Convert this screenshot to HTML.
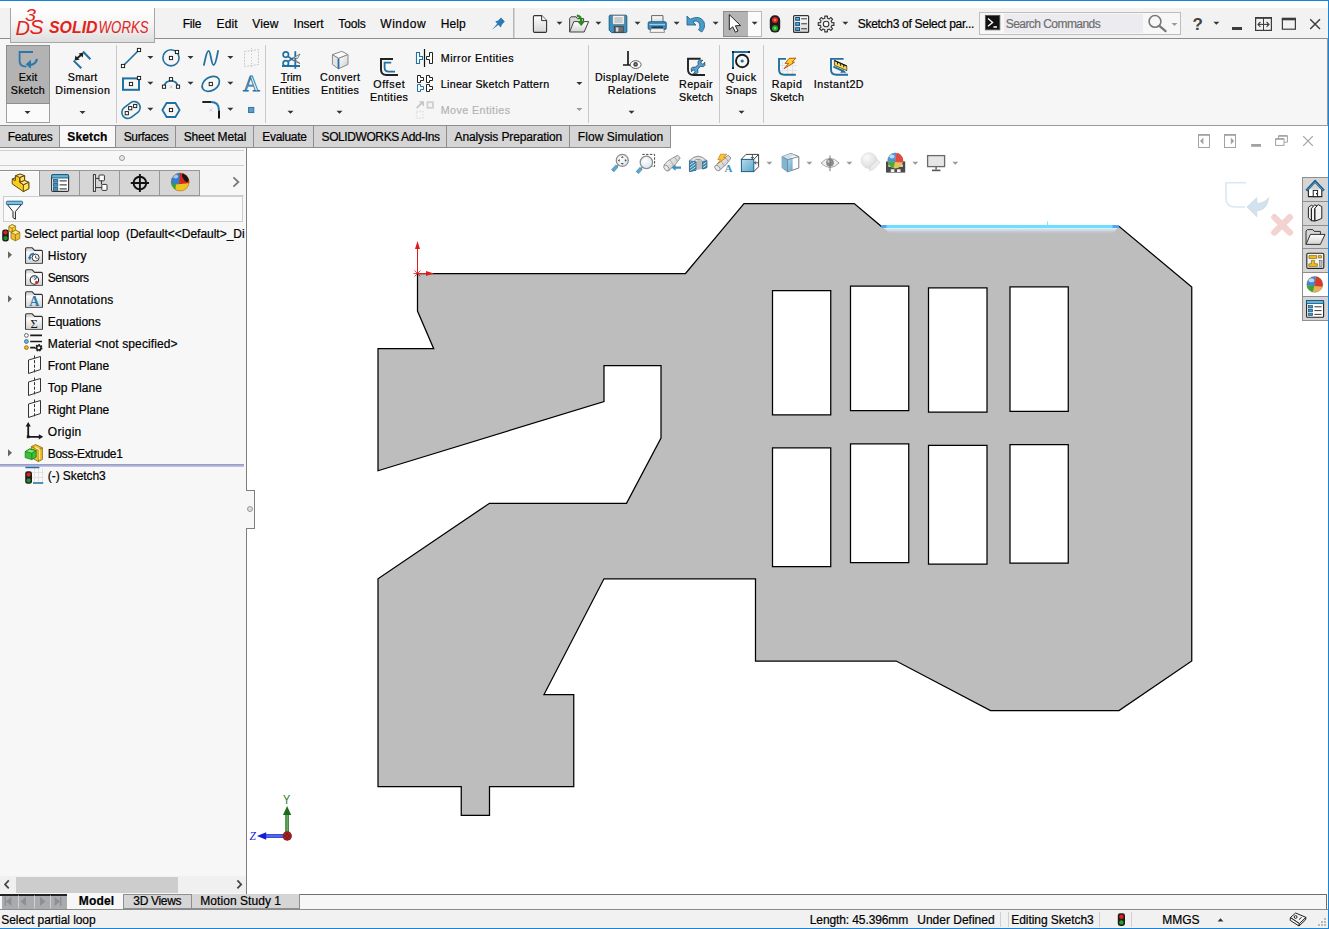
<!DOCTYPE html>
<html lang="en">
<head>
<meta charset="utf-8">
<title>SOLIDWORKS - Sketch3 of Select partial loop</title>
<style>
html,body{margin:0;padding:0;background:#fff;}
body{width:1329px;height:929px;overflow:hidden;}
#app{position:relative;width:1329px;height:929px;overflow:hidden;background:#fff;font-family:"Liberation Sans",sans-serif;font-size:12px;line-height:16px;color:#000;}
#app div,#app span,#app svg{position:absolute;box-sizing:border-box;}
.t{white-space:pre;line-height:16px;height:16px;-webkit-text-stroke:0.2px currentColor;}
.t u{text-decoration:underline;}
.vsep{width:1px;top:45px;height:78px;background:#c9c9c9;}
.cmtab{top:125px;height:23px;background:#d5d5d5;border:1px solid #8e8e8e;}
.ptab{top:170px;height:26px;background:#d6d6d6;border:1px solid #979797;}
.btab{top:894px;height:15px;background:#d5d5d5;border:1px solid #8e8e8e;border-top:none;}
.tp{left:1302px;width:26px;height:25px;background:#d5d5d5;border:1px solid #8e8e8e;border-right:none;}
.dd{width:0;height:0;border-left:3px solid transparent;border-right:3px solid transparent;border-top:3px solid #333;}
.ddg{width:0;height:0;border-left:3px solid transparent;border-right:3px solid transparent;border-top:3px solid #9a9a9a;}
</style>
</head>
<body>
<div id="app">
<!-- window frame / title bar -->
<div style="left:0;top:0;width:1329px;height:1px;background:#1883d7"></div>
<div style="left:0;top:8px;width:1328px;height:30px;background:#f2f2f2"></div>
<div style="left:0;top:38px;width:1328px;height:1px;background:#8c8c8c"></div>
<!-- command manager background -->
<div style="left:0;top:39px;width:1328px;height:86px;background:#f6f6f6"></div>
<div style="left:0;top:125px;width:1328px;height:1px;background:#9b9b9b"></div>
<div style="left:1327px;top:38px;width:1px;height:88px;background:#9b9b9b"></div>
<!-- logo plate -->
<div style="left:10px;top:8px;width:145px;height:35px;border:1px solid #a6a6a6;border-top:none;background:linear-gradient(180deg,#ffffff 0%,#f6f6f6 45%,#dedede 100%)"></div>
<!-- title bar separator -->
<div style="left:513px;top:8px;width:2px;height:30px;background:linear-gradient(90deg,#a9a9a9,#e3e3e3)"></div>
<!-- select button -->
<div style="left:723px;top:11px;width:26px;height:26px;background:#b4b4b4;border:1px solid #8c8c8c"></div>
<div style="left:748px;top:11px;width:14px;height:26px;background:#fbfbfb;border:1px solid #b9b9b9;border-left:none"></div>
<!-- search box -->
<div style="left:979px;top:12px;width:202px;height:23px;background:#f7f7f7;border:1px solid #bdbdbd"></div>
<div style="left:1004px;top:14px;width:139px;height:19px;background:#ececf0"></div>
<!-- Exit sketch pressed button -->
<div style="left:6px;top:45px;width:44px;height:78px;background:#fbfbfb;border:1px solid #a0a0a0"></div>
<div style="left:6px;top:45px;width:44px;height:59px;background:#b3b3b3;border:1px solid #8f8f8f"></div>
<!-- CM separators -->
<div class="vsep" style="left:116px"></div>
<div class="vsep" style="left:265px"></div>
<div class="vsep" style="left:588px"></div>
<div class="vsep" style="left:719px"></div>
<div class="vsep" style="left:763px"></div>
<!-- left panel -->
<div style="left:0;top:126px;width:246px;height:768px;background:#f7f7f7"></div>
<div style="left:246px;top:126px;width:1px;height:768px;background:#7f7f7f"></div>

<div style="left:0;top:150px;width:244px;height:1px;background:#cfcfcf"></div>
<div style="left:0;top:165px;width:244px;height:1px;background:#cfcfcf"></div>
<div style="left:119px;top:155px;width:6px;height:6px;border-radius:3px;border:1px solid #9a9a9a;background:#e9e9e9"></div>
<!-- CM tabs -->
<div class="cmtab" style="left:-1px;width:61px"></div>
<div style="left:60px;top:126px;width:55px;height:21px;background:#f8f8f8"></div>
<div style="left:0;top:147px;width:247px;height:1px;background:#858585"></div>
<div class="cmtab" style="left:115px;width:61px"></div>
<div class="cmtab" style="left:175px;width:79px"></div>
<div class="cmtab" style="left:253px;width:61px"></div>
<div class="cmtab" style="left:313px;width:134px"></div>
<div class="cmtab" style="left:446px;width:124px"></div>
<div class="cmtab" style="left:569px;width:102px"></div>
<!-- panel tabs -->
<div style="left:0;top:170px;width:40px;height:1px;background:#8e8e8e"></div>
<div style="left:0;top:171px;width:39px;height:1px;background:#fff"></div>
<div style="left:38px;top:171px;width:1px;height:25px;background:#fff"></div>
<div class="ptab" style="left:39px;width:41px"></div>
<div class="ptab" style="left:79px;width:41px"></div>
<div class="ptab" style="left:119px;width:41px"></div>
<div class="ptab" style="left:159px;width:41px"></div>
<div style="left:200px;top:195px;width:44px;height:1px;background:#cfcfcf"></div>
<!-- filter box -->
<div style="left:3px;top:196px;width:240px;height:26px;background:#fafafa;border:1px solid #cdcdcd"></div>
<!-- rollback bar -->
<div style="left:0;top:464px;width:244px;height:3px;background:linear-gradient(180deg,#8e93c4,#c9cce6)"></div>
<!-- splitter handle -->
<div style="left:246px;top:490px;width:9px;height:39px;background:#f7f7f7;border:1px solid #7f7f7f;border-left:none"></div>
<div style="left:247px;top:506px;width:6px;height:6px;border-radius:3px;border:1px solid #9a9a9a;background:#dcdcdc"></div>
<!-- tree scrollbar -->
<div style="left:0;top:876px;width:246px;height:17px;background:#f0f0f0"></div>
<div style="left:16px;top:877px;width:162px;height:16px;background:#cdcdcd"></div>
<!-- bottom tab row -->
<div style="left:0;top:894px;width:1327px;height:1px;background:#6f6f6f"></div>
<div style="left:0;top:895px;width:1326px;height:14px;background:#f7f7f7"></div>
<div style="left:1326px;top:894px;width:1px;height:16px;background:#6f6f6f"></div>
<div style="left:0;top:909px;width:1328px;height:1px;background:#8c8c8c"></div>
<div style="left:2px;top:895px;width:65px;height:14px;background:#a9abae"></div>
<div style="left:0;top:894px;width:67px;height:2px;background:#222"></div>
<div style="left:67px;top:894px;width:56px;height:15px;background:#f7f7f7"></div>
<div class="btab" style="left:123px;width:69px;border-top:1px solid #8e8e8e"></div>
<div class="btab" style="left:191px;width:109px"></div>
<!-- status bar -->
<div style="left:0;top:910px;width:1328px;height:18px;background:#f1f1f1"></div>
<div style="left:0;top:928px;width:1329px;height:1px;background:#1883d7"></div>
<div style="left:1328px;top:0;width:1px;height:929px;background:#1883d7"></div>
<div style="left:1000px;top:912px;width:1px;height:15px;background:#d0d0d0"></div>
<div style="left:1008px;top:912px;width:1px;height:15px;background:#d0d0d0"></div>
<div style="left:1099px;top:912px;width:1px;height:15px;background:#d0d0d0"></div>
<div style="left:1131px;top:912px;width:1px;height:15px;background:#d0d0d0"></div>
<!-- task pane -->
<div class="tp" style="top:177px"></div>
<div class="tp" style="top:201px"></div>
<div class="tp" style="top:225px"></div>
<div class="tp" style="top:248px"></div>
<div class="tp" style="top:272px;background:#fdfdfd"></div>
<div class="tp" style="top:296px"></div>
<!-- graphics area drawing -->
<svg style="left:247px;top:126px" width="1081" height="768" viewBox="247 126 1081 768">
<defs>
<filter id="glow" x="-5%" y="-400%" width="110%" height="900%"><feGaussianBlur stdDeviation="1.6"/></filter>
</defs>
<path fill="#bdbdbd" stroke="#000" stroke-width="1.25" stroke-linejoin="miter" fill-rule="evenodd" d="M417.5 273.5 L685.5 273.5 L744 203.5 L854.25 203.5 L881.5 226.5 L1119.25 226.5 L1191.75 287 L1191.75 661 L1119 710.5 L990.5 710.5 L896.2 661 L755.5 661 L755.5 578.75 L604 578.75 L544 694.5 L573.75 694.5 L573.75 786.5 L489.5 786.5 L489.5 815.25 L461.25 815.25 L461.25 786.5 L378 786.5 L378 578.75 L489.5 503.25 L626.5 503.25 L661 438 L661 365.5 L604 365.5 L604 401.5 L378 470.75 L378 348.7 L433.7 348.7 L417.5 311 Z
M772.5 290.5 H830.75 V414.75 H772.5 Z M850.5 286 H908.75 V410.5 H850.5 Z M928.5 287.75 H987 V412 H928.5 Z M1010 286.75 H1068.25 V411.25 H1010 Z
M772.5 447.75 H830.75 V566.5 H772.5 Z M850.5 443.75 H908.75 V562.5 H850.5 Z M928.5 445.25 H987 V564 H928.5 Z M1010 444.5 H1068.25 V563 H1010 Z"/>
<!-- selected edge -->
<linearGradient id="gglow" x1="0" y1="0" x2="0" y2="1"><stop offset="0" stop-color="#e9f6ff" stop-opacity="1"/><stop offset="0.45" stop-color="#d3dbee" stop-opacity="0.75"/><stop offset="1" stop-color="#bdbdbd" stop-opacity="0"/></linearGradient>
<path d="M883 227.5 H1118 L1112 234.5 H891 Z" fill="url(#gglow)"/>
<rect x="881.5" y="225" width="237.5" height="3" fill="#6ce0ff"/>
<rect x="881.5" y="225" width="5" height="3" fill="#5aa2f2"/>
<rect x="1112.5" y="225" width="6.5" height="3" fill="#5aa2f2"/>
<line x1="1047.5" y1="221.5" x2="1047.5" y2="225" stroke="#7fe2ff" stroke-width="1"/>
<!-- sketch origin -->
<g stroke="#e21b1b" fill="#e21b1b" stroke-width="1">
<line x1="417.5" y1="273.5" x2="417.5" y2="243"/><polygon points="417.5,241 415,249 420,249" stroke="none"/>
<line x1="417.5" y1="273.5" x2="431" y2="273.5"/><polygon points="434,273.5 426,271 426,276" stroke="none"/>
<path d="M414.5 270.5 L420.5 276.5 M420.5 270.5 L414.5 276.5 M413.5 273.5 H421.5" fill="none" stroke-width="0.8"/>
</g>
<!-- triad -->
<g>
<rect x="285.3" y="814" width="3.5" height="19" fill="#1c6b1c"/><rect x="286.4" y="814.5" width="1.4" height="18" fill="#78b878"/>
<polygon points="287.1,806 283,815 291.2,815" fill="#1c6b1c"/>
<rect x="265.5" y="834.2" width="18" height="3.6" fill="#1a1ae0"/><rect x="266" y="835.3" width="17" height="1.4" fill="#5c94e4"/>
<polygon points="257,836 266.2,832.2 266.2,839.8" fill="#1a1ad8"/>
<circle cx="287.2" cy="836" r="4.7" fill="#7c1c1c"/>
<path d="M284 833 L290.4 839 M290.4 833 L284 839 M283 836 L287.2 831.6 L291.4 836 L287.2 840.4 Z" fill="none" stroke="#e62222" stroke-width="0.5"/>
<text x="283" y="803.6" font-family="Liberation Sans, sans-serif" font-size="12" fill="#1e7a1e" textLength="7.2" lengthAdjust="spacingAndGlyphs">Y</text>
<text x="249.6" y="839.8" font-family="Liberation Serif, serif" font-size="12.5" font-style="italic" fill="#1a1ae0" textLength="6.4" lengthAdjust="spacingAndGlyphs">Z</text>
</g>
</svg>
<!-- icons overlay (page coordinates) -->
<svg style="left:0;top:0;pointer-events:none" width="1329" height="929" viewBox="0 0 1329 929">
<defs>
<g id="dd"><path d="M-3 -1.5 H3 L0 1.5 Z" fill="#333"/></g>
<g id="ddg"><path d="M-3 -1.5 H3 L0 1.5 Z" fill="#9a9a9a"/></g>
<g id="sq"><rect x="-1.6" y="-1.6" width="3.2" height="3.2" fill="#fff" stroke="#1a1a1a" stroke-width="0.95"/></g>
<linearGradient id="gcube" x1="0" y1="0" x2="1" y2="1"><stop offset="0" stop-color="#fff"/><stop offset="1" stop-color="#cfcfcf"/></linearGradient>
<linearGradient id="gblue" x1="0" y1="0" x2="0" y2="1"><stop offset="0" stop-color="#8cc3de"/><stop offset="1" stop-color="#2d7fae"/></linearGradient>
<linearGradient id="gyel" x1="0" y1="0" x2="0" y2="1"><stop offset="0" stop-color="#ffe680"/><stop offset="1" stop-color="#e0a400"/></linearGradient>
<linearGradient id="gfold" x1="0" y1="0" x2="0" y2="1"><stop offset="0" stop-color="#ffffff"/><stop offset="1" stop-color="#d4d4d4"/></linearGradient>
</defs>
<!-- ===== Command manager icons ===== -->
<g id="ic-exit" fill="none" stroke="#2878ab" stroke-width="1.8">
<path d="M33 52 H19.6 V61 Q19.6 66.6 26.5 66.6"/>
<path d="M37 59 Q35.5 65.2 29 64.8" stroke-width="2.2"/>
<path d="M25.6 64.3 L31 59.8 L31 68.8 Z" fill="#2878ab" stroke="none"/>
</g>
<g id="ic-smart">
<path d="M73.6 60.6 L81.3 68.3 M83 51.5 L90.4 59.2" stroke="#21709f" stroke-width="2" fill="none"/>
<path d="M76.6 58.8 L81.6 54.4" stroke="#222" stroke-width="2"/>
<path d="M74.6 60.4 L75.4 55.6 L79.6 59.8 Z M83.4 52.6 L82.8 57.6 L78.6 53.4 Z" fill="#222"/>
</g>
<!-- row 1 -->
<g><path d="M123 66 L139 50" stroke="#21709f" stroke-width="1.7"/><use href="#sq" x="123" y="66"/><use href="#sq" x="139" y="50"/></g>
<use href="#dd" x="150.4" y="57.5"/>
<g><circle cx="171" cy="57.8" r="8.1" fill="none" stroke="#21709f" stroke-width="1.6"/><use href="#sq" x="171" y="58"/><use href="#sq" x="177" y="52"/></g>
<use href="#dd" x="190.5" y="57.5"/>
<path d="M203.8 65.6 C205.5 58 206.5 50.8 208.6 50.8 C211 50.8 211 65 213.6 65 C215.8 65 217 56 218.2 50.2" fill="none" stroke="#21709f" stroke-width="1.8"/>
<use href="#dd" x="230.4" y="57.5"/>
<g stroke="#c9c9c9" stroke-width="1" fill="none" stroke-dasharray="2 1.2"><path d="M244.5 51.5 L258.5 49.5 V64.5 L244.5 66.5 Z"/><path d="M251.5 48 V68" stroke-dasharray="1 2"/></g>
<!-- row 2 -->
<g><rect x="123" y="78.4" width="16" height="11.4" fill="none" stroke="#21709f" stroke-width="2"/><use href="#sq" x="131" y="84"/><use href="#sq" x="139" y="78"/></g>
<use href="#dd" x="150.4" y="83.3"/>
<g><path d="M164 86.7 A7.2 7.6 0 0 1 178 86.7" fill="none" stroke="#21709f" stroke-width="1.6"/><path d="M169.5 85.2 L172.5 88.2 M172.5 85.2 L169.5 88.2" stroke="#bbb" stroke-width="0.8"/><use href="#sq" x="164" y="86.7"/><use href="#sq" x="171" y="79.2"/><use href="#sq" x="178" y="86.7"/></g>
<use href="#dd" x="190.5" y="83.3"/>
<g><ellipse cx="210.8" cy="83.9" rx="9.4" ry="6.6" transform="rotate(-32 210.8 83.9)" fill="none" stroke="#21709f" stroke-width="1.7"/><use href="#sq" x="210.8" y="84"/></g>
<use href="#dd" x="230.4" y="83.3"/>
<text x="251.2" y="91.4" text-anchor="middle" font-family="Liberation Serif, serif" font-size="23" fill="#fff" stroke="#21709f" stroke-width="0.9">A</text>
<!-- row 3 -->
<g><g transform="rotate(-38 131 110)"><rect x="121" y="104" width="20" height="12" rx="6" fill="none" stroke="#21709f" stroke-width="1.6"/></g><use href="#sq" x="126.8" y="113.2"/><use href="#sq" x="130.2" y="108.2"/><use href="#sq" x="135.2" y="106"/></g>
<use href="#dd" x="150.4" y="109.2"/>
<g><path d="M162.4 110 L166.6 103 H175.4 L179.6 110 L175.4 117 H166.6 Z" fill="none" stroke="#21709f" stroke-width="1.8"/><use href="#sq" x="171" y="110"/></g>
<g fill="none" stroke-width="2"><path d="M202.3 102 H211" stroke="#222"/><path d="M211 102 Q219 102 219 110.4" stroke="#2878ab"/><path d="M219 110.4 V118.6" stroke="#111"/><path d="M209.3 108.5 L212.3 111.5 M212.3 108.5 L209.3 111.5" stroke="#c4c4c4" stroke-width="0.8"/></g>
<use href="#dd" x="230.4" y="109.2"/>
<rect x="248.6" y="107.4" width="5.2" height="5.2" fill="#5b9fc6" stroke="#21709f" stroke-width="0.9"/>
<!-- Trim -->
<g fill="none" stroke="#21709f">
<path d="M295.3 51.2 V68.8 M282 66 H300" stroke-width="1.8"/>
<circle cx="285.8" cy="54.6" r="2.7" stroke-width="1.7"/><circle cx="285.8" cy="63.3" r="2.7" stroke-width="1.7"/>
<path d="M288 56.3 L293 60 M288 61.6 L293 58" stroke-width="1.6"/>
<path d="M293 58 L300 54 L297.5 58.5 Z M293 60.5 L300 63.5 L296 60.5 Z" fill="#e8e8e8" stroke="#555" stroke-width="0.7"/>
</g>
<use href="#dd" x="290.5" y="112.3"/>
<!-- Convert -->
<g stroke="#8a8a8a" stroke-width="1" stroke-linejoin="round">
<path d="M332.4 54.6 L341.8 51.3 L348 54.6 L338.5 58.4 Z" fill="#fafafa"/>
<path d="M332.4 54.6 L338.5 58.4 V68.8 L332.4 64.4 Z" fill="#e4e4e4"/>
<path d="M338.5 58.4 L348 54.6 V64.4 L338.5 68.8 Z" fill="url(#gcube)"/>
<path d="M338.5 58.6 V68.6" stroke="#21709f" stroke-width="1.8"/>
</g>
<use href="#dd" x="339.5" y="112.3"/>
<!-- Offset -->
<g fill="none" stroke-width="2">
<path d="M393 58.9 H381 V69.5 Q381 75 386.5 75 H398" stroke="#222"/>
<path d="M391.2 62.6 H384.6 V67.5 Q384.6 71.6 388.8 71.6 H395" stroke="#21709f" stroke-width="1.8"/>
</g>
<!-- Mirror -->
<g stroke-width="1" fill="#fff">
<path d="M424.5 49 V67" stroke="#111" stroke-width="1.2"/>
<path d="M416.5 52.5 H419.5 V56.5 H422.5 V59.5 H419.5 V63.5 H416.5 Z" stroke="#21709f" stroke-width="1.1"/>
<path d="M432.5 52.5 H429.5 V56.5 H426.5 V59.5 H429.5 V63.5 H432.5 Z" stroke="#222"/>
</g>
<!-- Linear pattern -->
<g stroke-width="1" fill="#fff" stroke="#222">
<path d="M417.5 75.5 H420.5 V77.5 H423.5 V80.5 H420.5 V82.5 H417.5 Z"/>
<path d="M426.5 75.5 H429.5 V77.5 H432.5 V80.5 H429.5 V82.5 H426.5 Z"/>
<path d="M417.5 84.5 H420.5 V86.5 H423.5 V89.5 H420.5 V91.5 H417.5 Z" stroke="#21709f"/>
<path d="M426.5 84.5 H429.5 V86.5 H432.5 V89.5 H429.5 V91.5 H426.5 Z"/>
</g>
<!-- Move (disabled) -->
<g>
<path d="M416.6 108.2 L422 102.8" stroke="#c6c6c6" stroke-width="1.8" fill="none"/>
<path d="M418.8 101.3 H424 V106.5 Z" fill="#c6c6c6"/>
<rect x="427.4" y="102.2" width="5.6" height="5.6" fill="none" stroke="#cfcfcf" stroke-width="1.8"/>
<rect x="416.5" y="111.5" width="6.5" height="6.5" fill="none" stroke="#dcdfe8" stroke-width="1.4" stroke-dasharray="1.5 1.5"/>
</g>
<use href="#dd" x="579.4" y="83.5"/><use href="#ddg" x="579.4" y="109.4"/>
<!-- Display/Delete Relations -->
<g fill="none" stroke="#1a1a1a">
<path d="M628 51 V65 M623 65 H631" stroke-width="1.7"/>
<ellipse cx="635.7" cy="64.6" rx="5.4" ry="3.9" fill="#fff" stroke="#555" stroke-width="0.9"/>
<circle cx="635.6" cy="64.4" r="2.3" fill="#444" stroke="none"/><circle cx="635.6" cy="64.4" r="0.9" fill="#999" stroke="none"/>
</g>
<use href="#dd" x="631.5" y="112.3"/>
<!-- Repair sketch -->
<g fill="none">
<path d="M700.6 58.8 H688 V69.5 Q688 75 693.5 75 H705" stroke="#222" stroke-width="1.9"/>
<path d="M698.1 61.2 L699.5 60.2 L702.9 60.3 L701.05 61.7 L701.05 62.75 L702.6 64.3 L703.9 63.5 L704.7 62.1 L704.9 65.3 L703.6 66.6 L700.5 66.4 L697.7 69.1 L697.95 72.6 L696.4 73.6 L693.3 73.6 L695.1 71.8 L694.3 70.2 L692.8 70 L691.5 71.8 L691.2 68.4 L692.3 67.3 L695.6 67.1 L698.1 64.6 Z" fill="#5a9fcb" stroke="#114d74" stroke-width="0.8" stroke-linejoin="round"/>
</g>
<!-- Quick snaps -->
<g fill="none">
<path d="M749.6 52 H733 V68.6" stroke="#21709f" stroke-width="1.9"/>
<rect x="732" y="51" width="2" height="2" fill="#222"/><rect x="748" y="51" width="2" height="2" fill="#222"/><rect x="732" y="67" width="2" height="2" fill="#222"/>
<circle cx="742.2" cy="61" r="6.2" stroke="#1a1a1a" stroke-width="1.9"/>
<circle cx="742.2" cy="61" r="1.6" fill="#21709f"/>
</g>
<use href="#dd" x="741.5" y="112.3"/>
<!-- Rapid sketch -->
<g fill="none">
<path d="M782.5 62 V74 M787.5 62 V74 M792.5 62 V74 M780 65.5 H797 M780 70.5 H797" stroke="#e3e3e3" stroke-width="1"/>
<path d="M786 58.9 H779 V69.5 Q779 74.8 784.4 74.8 H795.8" stroke="#21709f" stroke-width="1.9"/>
<path d="M796 58.1 L789 58.4 L785.1 63.4 H788.7 L784 68.7 L794.5 62.2 L792.2 61.9 Z" fill="#f9d52a" stroke="#b3480a" stroke-width="0.9" stroke-linejoin="round"/>
</g>
<!-- Instant2D -->
<g fill="none">
<path d="M843.6 58.9 H831 V69.5 Q831 74.8 836.4 74.8 H848" stroke="#21709f" stroke-width="1.9"/>
<path d="M834.4 60.5 L846.8 66 V70.7 L834.4 65.2 Z" fill="#f7d64a" stroke="#222" stroke-width="0.7"/>
<path d="M834.4 60.5 L846.8 66" stroke="#111" stroke-width="1.2"/>
<path d="M837.5 62 V64.4 M840.6 63.4 V65.8 M843.7 64.8 V67.2" stroke="#111" stroke-width="0.9"/>
<path d="M833.4 66.6 L842.6 70.8" stroke="#21709f" stroke-width="1.9"/>
<path d="M846.4 72.8 H840.2 L842.7 69.2 Z" fill="#21709f"/>
</g>
<use href="#dd" x="27.5" y="112.5"/><use href="#dd" x="82.5" y="112.5"/>
<!-- ===== title bar icons ===== -->
<!-- pin -->
<g fill="#2d79b3" stroke="none">
<path d="M492 29.8 L497.6 23.2 L498.8 24.4 Z"/>
<path d="M495.2 21.6 L500.8 27.4 L502 24.6 L504.8 21.4 L501 17.6 L498.2 20.6 Z"/>
</g>
<!-- new -->
<g>
<path d="M534.6 15.6 H541.6 L546.6 20.6 V31.2 Q546.6 32.4 545.4 32.4 H534.6 Q533.4 32.4 533.4 31.2 V16.8 Q533.4 15.6 534.6 15.6 Z" fill="url(#gfold)" stroke="#333" stroke-width="1.1"/>
<path d="M541.6 15.6 V20.6 H546.6" fill="#f4f4f4" stroke="#333" stroke-width="1"/>
</g>
<use href="#dd" x="559.5" y="23.3"/>
<!-- open -->
<g>
<path d="M569.6 32 V18.4 L571 16.8 H576 L577.4 18.6 H583.6 V22" fill="#d9d9d9" stroke="#444" stroke-width="1"/>
<path d="M569.6 32 L573.8 21.6 H588.6 L584.2 32 Z" fill="url(#gfold)" stroke="#444" stroke-width="1"/>
<path d="M576.8 15.6 Q581.4 16 581.2 21.4" fill="none" stroke="#2a8a1c" stroke-width="2.2"/>
<path d="M577 21 H585.4 L581.2 26 Z" fill="#2a8a1c"/>
</g>
<use href="#dd" x="598.4" y="23.3"/>
<!-- save -->
<g>
<path d="M610.4 15.2 H625.6 Q626.8 15.2 626.8 16.4 V31.4 Q626.8 32.6 625.6 32.6 H611.6 L609.2 30.2 V16.4 Q609.2 15.2 610.4 15.2 Z" fill="#3f8fbd" stroke="#1b5d86" stroke-width="1"/>
<rect x="612.8" y="15.6" width="11.4" height="8.6" fill="#f5f5f5" stroke="#777" stroke-width="0.6"/>
<path d="M614.4 18 H622.6 M614.4 20 H622.6 M614.4 22 H622.6" stroke="#8a8a8a" stroke-width="0.8"/>
<rect x="614.2" y="26.6" width="9" height="5.6" fill="#6e6e6e" stroke="#333" stroke-width="0.6"/>
<rect x="616" y="27.4" width="2.4" height="4.2" fill="#d8d8d8"/>
</g>
<use href="#dd" x="637.5" y="23.3"/>
<!-- print -->
<g>
<path d="M651.6 22.5 V15.6 H663 V22.5" fill="url(#gfold)" stroke="#666" stroke-width="1"/>
<path d="M649.4 21.8 H665 Q666.2 21.8 666.2 23 V28.2 Q666.2 29.4 665 29.4 H649.4 Q648.2 29.4 648.2 28.2 V23 Q648.2 21.8 649.4 21.8 Z" fill="#3f8fbd" stroke="#1b5d86" stroke-width="1"/>
<path d="M649.4 24.6 H665" stroke="#a8d4ea" stroke-width="1"/>
<rect x="651.6" y="26.4" width="11.4" height="2" fill="#14405c"/>
<path d="M651 28.6 H663.6 L664.6 32.4 H650 Z" fill="#f4f4f4" stroke="#777" stroke-width="0.8"/>
</g>
<use href="#dd" x="676.6" y="23.3"/>
<!-- undo -->
<g>
<path d="M687 16 V25 H696 L692.8 21.8 Q697.4 19.4 699.6 24 Q700.8 27.4 698.6 30 L701.8 32 Q706 27.2 703.8 21.6 Q699.8 14.6 690.2 19.2 Z" fill="#4d9ac6" stroke="#236a94" stroke-width="0.9" stroke-linejoin="round"/>
</g>
<use href="#dd" x="715.6" y="23.3"/>
<!-- cursor -->
<path d="M729.3 14.6 V29.8 L732.8 26.8 L735.4 32.2 L738 31 L735.4 25.8 L740.6 25.6 Z" fill="#fff" stroke="#222" stroke-width="1" stroke-linejoin="round"/>
<use href="#dd" x="754.6" y="23.3"/>
<!-- traffic light -->
<g>
<rect x="769.8" y="15.2" width="10.4" height="17.4" rx="5" fill="#1c1c1c"/>
<circle cx="775" cy="20" r="3" fill="#e02020"/><circle cx="775" cy="28.2" r="3" fill="#24a224"/>
<path d="M773.6 20 H776.4 M775 18.6 V21.4" stroke="#ff9a9a" stroke-width="0.8"/><path d="M773.6 28.2 H776.4 M775 26.8 V29.6" stroke="#9be89b" stroke-width="0.8"/>
</g>
<!-- list -->
<g id="listico">
<rect x="793.6" y="15.6" width="15" height="16.8" rx="1" fill="url(#gfold)" stroke="#333" stroke-width="1.2"/>
<rect x="795.2" y="17" width="4.8" height="3.8" fill="#0f5580"/><rect x="795.2" y="22.1" width="4.8" height="3.8" fill="#0f5580"/><rect x="795.2" y="27.2" width="4.8" height="3.8" fill="#0f5580"/>
<rect x="796.2" y="18" width="2.8" height="1.6" fill="#6fb2d6"/><rect x="796.2" y="23.1" width="2.8" height="1.6" fill="#6fb2d6"/><rect x="796.2" y="28.2" width="2.8" height="1.6" fill="#6fb2d6"/>
<path d="M801.2 18.8 H807 M801.2 23.8 H807 M801.2 28.8 H807" stroke="#333" stroke-width="1"/>
</g>
<!-- gear -->
<path d="M833.98 22.65 L833.98 25.35 L831.86 25.29 L831.08 27.16 L832.63 28.62 L830.72 30.53 L829.26 28.98 L827.39 29.76 L827.45 31.88 L824.75 31.88 L824.81 29.76 L822.94 28.98 L821.48 30.53 L819.57 28.62 L821.12 27.16 L820.34 25.29 L818.22 25.35 L818.22 22.65 L820.34 22.71 L821.12 20.84 L819.57 19.38 L821.48 17.47 L822.94 19.02 L824.81 18.24 L824.75 16.12 L827.45 16.12 L827.39 18.24 L829.26 19.02 L830.72 17.47 L832.63 19.38 L831.08 20.84 L831.86 22.71 Z" fill="#f0f0f0" stroke="#333" stroke-width="1.1" stroke-linejoin="round"/>
<circle cx="826.1" cy="24" r="2.8" fill="#fafafa" stroke="#333" stroke-width="1.1"/>
<use href="#dd" x="845.4" y="23.2"/>
<!-- search box icons -->
<rect x="985.4" y="15.4" width="14.4" height="14.4" fill="#111" stroke="#555" stroke-width="0.9"/>
<path d="M988 18.6 L992.6 22.4 L988 26.2 M993.4 27 H997" fill="none" stroke="#fff" stroke-width="1.3"/>
<circle cx="1155" cy="21.4" r="5.9" fill="none" stroke="#777" stroke-width="1.6"/>
<path d="M1159.4 25.8 L1165.6 31.2" stroke="#777" stroke-width="2.2" stroke-linecap="round"/>
<use href="#ddg" x="1174.5" y="24.5"/>
<!-- help & window buttons -->
<text x="1192.4" y="30.4" font-family="Liberation Sans, sans-serif" font-size="17" font-weight="bold" fill="#444">?</text>
<use href="#dd" x="1216.4" y="23.3"/>
<rect x="1232" y="27" width="10" height="3" fill="#3c3c3c"/>
<g fill="none" stroke="#3c3c3c">
<rect x="1255.6" y="18" width="15.8" height="12.4" stroke-width="1.2"/><path d="M1255 17.8 H1272" stroke-width="1.6"/><path d="M1263.5 18 V30.4" stroke-width="1"/>
<path d="M1258 24.4 H1269" stroke-width="1.1"/><path d="M1260.4 22 L1258 24.4 L1260.4 26.8 M1266.6 22 L1269 24.4 L1266.6 26.8" stroke-width="1.1"/>
<rect x="1282.4" y="19.2" width="13" height="10" stroke-width="1.2"/><path d="M1281.8 19 H1296" stroke-width="2.6"/>
<path d="M1310.2 19.2 L1320 29 M1320 19.2 L1310.2 29" stroke-width="1.4"/>
</g>
<!-- logo -->
<g fill="#e1231b" font-family="Liberation Sans, sans-serif" font-style="italic">
<text x="25" y="21.4" font-size="16.5" textLength="11" lengthAdjust="spacingAndGlyphs">3</text>
<text x="15.6" y="35.4" font-size="21" textLength="14.5" lengthAdjust="spacingAndGlyphs">D</text>
<text x="29.4" y="33.6" font-size="21" textLength="14" lengthAdjust="spacingAndGlyphs">S</text>
<text x="49" y="32.8" font-size="16.6" font-weight="bold" textLength="48.6" lengthAdjust="spacingAndGlyphs">SOLID</text>
<text x="98.6" y="32.8" font-size="16.6" textLength="50" lengthAdjust="spacingAndGlyphs">WORKS</text>
</g>
<!-- ===== feature manager ===== -->
<!-- panel tab icons -->
<g stroke="#5e3c00" stroke-width="0.9" stroke-linejoin="round">
<path d="M12.2 179.2 L15.4 177.8 V175.8 L20.2 174.1 L24.6 175.8 V180.6 L28.8 182.3 V188.7 L23.3 191.6 L12.2 183.9 Z" fill="#f6cc1e"/>
<path d="M15.4 175.8 L20.2 174.1 L24.6 175.8 L19.8 177.5 Z" fill="#ffeaa0"/>
<path d="M19.8 177.5 L24.6 175.8 V180.6 L19.8 182.2 Z" fill="#ffe55c"/>
<path d="M19.8 182.2 L24.6 180.6 L28.8 182.3 L23.4 184.9 Z" fill="#ffeaa0"/>
<path d="M23.4 184.9 L28.8 182.3 V188.7 L23.3 191.6 Z" fill="#ffe55c"/>
<path d="M12.2 179.2 L15.4 177.8 L15.4 180.6 Z" fill="#ffeaa0"/>
<path d="M19.8 177.5 V182.2 L23.4 184.9" fill="none"/>
</g>
<g>
<rect x="51.6" y="174.8" width="17" height="16.6" rx="1.2" fill="#fff" stroke="#333" stroke-width="1.1"/>
<path d="M51.6 176 Q51.6 174.6 53 174.6 H67.2 Q68.6 174.6 68.6 176 V178 H51.6 Z" fill="#6db0d4" stroke="#0f5580" stroke-width="0.9"/>
<rect x="53.4" y="179.6" width="4.4" height="2.6" fill="#4d94bd" stroke="#0f5580" stroke-width="0.8"/><rect x="53.4" y="183.6" width="4.4" height="2.6" fill="#4d94bd" stroke="#0f5580" stroke-width="0.8"/><rect x="53.4" y="187.6" width="4.4" height="2.6" fill="#4d94bd" stroke="#0f5580" stroke-width="0.8"/>
<path d="M59.6 180.9 H66.8 M59.6 184.9 H66.8 M59.6 188.9 H66.8" stroke="#222" stroke-width="1"/>
</g>
<g fill="#fff" stroke="#333" stroke-width="1">
<rect x="93.4" y="174.6" width="2" height="16.8"/>
<path d="M95.4 178.4 H99 M95.4 187.6 H102" fill="none"/>
<rect x="99" y="175" width="5.4" height="5.8" rx="0.8"/><rect x="101.8" y="184.4" width="5.2" height="6" rx="0.8"/>
<path d="M101.5 180.8 V184.4" fill="none"/>
</g>
<g fill="none" stroke="#111" stroke-width="1.9"><circle cx="139.9" cy="183" r="6.3"/><path d="M130.8 183 H149 M139.9 173.9 V192.1"/></g>
<g id="ball">
<clipPath id="cpball"><circle cx="180.2" cy="182" r="9"/></clipPath>
<g clip-path="url(#cpball)">
<rect x="170" y="171" width="21" height="22" fill="#e8b21a"/>
<path d="M170 171 H181 L179 184 H170 Z" fill="#2f7fd6"/>
<path d="M170 183 L180 184.5 L176 193 H170 Z" fill="#35a62c"/>
<path d="M180 171 H191 V184 L179 184.5 Z" fill="#d8261c"/>
<path d="M176 184.6 L191 183 V193 H175 Z" fill="#efc21c"/>
<ellipse cx="185.4" cy="177.4" rx="2.6" ry="4.8" transform="rotate(-28 185.4 177.4)" fill="#151515"/>
<ellipse cx="175.6" cy="176.6" rx="2.6" ry="2" fill="#cfe6ff" opacity="0.7"/>
</g>
<circle cx="180.2" cy="182" r="9" fill="none" stroke="#7a4a10" stroke-width="0.6" opacity="0.6"/>
</g>
<path d="M233.4 177.4 L238.4 182 L233.4 186.6" fill="none" stroke="#777" stroke-width="1.7"/>
<!-- filter funnel -->
<g>
<path d="M7 204 L13 211.6 V217.6 L15.4 219.2 V211.6 L21.8 204 Z" fill="#fdfdfd" stroke="#222" stroke-width="1"/>
<rect x="6.4" y="201.2" width="16.2" height="3.4" rx="1" fill="#7dc0e6" stroke="#1b5d86" stroke-width="0.9"/>
</g>
<!-- root icon -->
<g>
<g stroke="#8a6400" stroke-width="0.7" stroke-linejoin="round">
<path d="M8.8 226.6 L12 224.6 L15.6 226.2 V231 L12.2 232.8 L8.8 231 Z" fill="#f3cd3a"/>
<path d="M8.8 226.6 L12.2 228.2 L15.6 226.2 L12 224.6 Z" fill="#ffe98a"/>
<path d="M11 232.4 L15.6 230.2 L19.8 232.4 V238.6 L15.4 240.8 L11 238.6 Z" fill="#eec02a"/>
<path d="M11 232.4 L15.4 234.6 L19.8 232.4 L15.6 230.2 Z" fill="#ffe98a"/>
<path d="M15.4 234.6 V240.8" fill="none"/><path d="M12.2 228.2 V232.4" fill="none"/>
</g>
<rect x="2.2" y="229.4" width="6.6" height="12" rx="2.6" fill="#1c1c1c"/>
<circle cx="5.5" cy="232.6" r="2.1" fill="#d62222"/><circle cx="5.5" cy="238.2" r="2.1" fill="#1f8f2a"/>
</g>
<!-- expand arrows -->
<path d="M8 251.2 L12 254.8 L8 258.4 Z M8 295.2 L12 298.8 L8 302.4 Z M8 449.2 L12 452.8 L8 456.4 Z" fill="#666"/>
<g transform="translate(0 0)">
<path d="M25.6 263.3 V248.8 Q25.6 247.8 26.6 247.8 H32.2 L34.6 250.4 H41.4 Q42.4 250.4 42.4 251.4 V263.3 Z" fill="#dcdcdc" stroke="#333" stroke-width="1.1" stroke-linejoin="round"/>
<path d="M26.2 262.8 V251.4 H41.8 V262.8 Z" fill="url(#gfold)"/>
<circle cx="35.6" cy="257.6" r="3.5" fill="#fff" stroke="#222" stroke-width="0.9"/><path d="M35.6 255.6 V257.8 L37.6 258.6" fill="none" stroke="#222" stroke-width="0.8"/><path d="M29.6 257.4 Q30.4 253.4 34.2 253.6" fill="none" stroke="#2d79ad" stroke-width="1.6"/><path d="M27.8 257 L31.6 257 L29.8 260.2 Z" fill="#2d79ad"/></g><g transform="translate(0 22)">
<path d="M25.6 263.3 V248.8 Q25.6 247.8 26.6 247.8 H32.2 L34.6 250.4 H41.4 Q42.4 250.4 42.4 251.4 V263.3 Z" fill="#dcdcdc" stroke="#333" stroke-width="1.1" stroke-linejoin="round"/>
<path d="M26.2 262.8 V251.4 H41.8 V262.8 Z" fill="url(#gfold)"/>
<circle cx="34.4" cy="258" r="4.2" fill="#fff" stroke="#222" stroke-width="1.1"/><path d="M34.4 258 L37 255" stroke="#2d79ad" stroke-width="1.2"/><path d="M32 255.4 L33 256.4 M34.4 254.6 V255.8" stroke="#222" stroke-width="0.7"/><circle cx="36.6" cy="260.2" r="1.5" fill="#e02020"/></g><g transform="translate(0 44)">
<path d="M25.6 263.3 V248.8 Q25.6 247.8 26.6 247.8 H32.2 L34.6 250.4 H41.4 Q42.4 250.4 42.4 251.4 V263.3 Z" fill="#dcdcdc" stroke="#333" stroke-width="1.1" stroke-linejoin="round"/>
<path d="M26.2 262.8 V251.4 H41.8 V262.8 Z" fill="url(#gfold)"/>
<text x="34.4" y="262.4" text-anchor="middle" font-family="Liberation Serif, serif" font-weight="bold" font-size="14" fill="#2d79ad">A</text></g><g transform="translate(0 66)">
<path d="M25.6 263.3 V248.8 Q25.6 247.8 26.6 247.8 H32.2 L34.6 250.4 H41.4 Q42.4 250.4 42.4 251.4 V263.3 Z" fill="#dcdcdc" stroke="#333" stroke-width="1.1" stroke-linejoin="round"/>
<path d="M26.2 262.8 V251.4 H41.8 V262.8 Z" fill="url(#gfold)"/>
<text x="34.2" y="262.4" text-anchor="middle" font-family="Liberation Serif, serif" font-size="12.5" fill="#111">Σ</text></g><!-- material -->
<g>
<circle cx="26.4" cy="335.4" r="1.9" fill="#fff" stroke="#444" stroke-width="0.8"/><circle cx="26.4" cy="341.5" r="1.9" fill="#6db8e6" stroke="#1b5d86" stroke-width="0.8"/><circle cx="26.4" cy="347.6" r="1.9" fill="#f5b91a" stroke="#8a6400" stroke-width="0.8"/>
<path d="M30.2 335.4 H42 M30.2 341.5 H42 M30.2 347.6 H35" stroke="#1a1a1a" stroke-width="1.7"/>
<circle cx="38.8" cy="347.8" r="2.6" fill="none" stroke="#1a1a1a" stroke-width="2.2" stroke-dasharray="1.4 0.9"/><circle cx="38.8" cy="347.8" r="2.2" fill="none" stroke="#1a1a1a" stroke-width="1.3"/>
</g>
<g transform="translate(0 0)"><path d="M28.5 360 L40.5 356.5 V369.5 L28.5 373.5 Z" fill="#fafafa" stroke="#333" stroke-width="1"/><path d="M34.5 355.5 V374" stroke="#333" stroke-width="1" stroke-dasharray="3 1.6"/></g>
<g transform="translate(0 22)"><path d="M28.5 360 L40.5 356.5 V369.5 L28.5 373.5 Z" fill="#fafafa" stroke="#333" stroke-width="1"/><path d="M34.5 355.5 V374" stroke="#333" stroke-width="1" stroke-dasharray="3 1.6"/></g>
<g transform="translate(0 44)"><path d="M28.5 360 L40.5 356.5 V369.5 L28.5 373.5 Z" fill="#fafafa" stroke="#333" stroke-width="1"/><path d="M34.5 355.5 V374" stroke="#333" stroke-width="1" stroke-dasharray="3 1.6"/></g>
<!-- origin -->
<g stroke="#1a1a1a" stroke-width="1.8" fill="#1a1a1a"><path d="M28.2 437 V425.4 M28.2 436.8 H40" fill="none"/><path d="M28.2 422 L25.6 426.4 H30.8 Z M43.2 436.8 L38.8 434.2 V439.4 Z" stroke="none"/><rect x="26.8" y="435.4" width="2.8" height="2.8" stroke="none"/></g>
<!-- boss extrude -->
<g stroke-linejoin="round" stroke-width="0.8">
<path d="M31.4 446.6 L35.6 444.6 L42.4 447.8 V459.4 L38.4 461.6 L31.4 457.6 Z" fill="#f0c02c" stroke="#8a6400"/>
<path d="M31.4 446.6 L38.4 450 V461.6" fill="none" stroke="#8a6400"/><path d="M38.4 450 L42.4 447.8" fill="none" stroke="#8a6400"/>
<path d="M35 447.4 L39.2 449.6 V459.6" fill="none" stroke="#fff0a8" stroke-width="1.2"/>
<path d="M25.2 451.6 L29.6 449 L36.2 450.6 V457 L31.8 459.6 L25.2 457.6 Z" fill="#38c238" stroke="#1c7a1c"/>
<path d="M25.2 451.6 L31.8 453.2 L36.2 450.6 L29.6 449 Z" fill="#7be47b" stroke="#1c7a1c"/><path d="M31.8 453.2 V459.6" fill="none" stroke="#1c7a1c"/>
</g>
<!-- sketch3 icon -->
<g>
<path d="M34.5 468 V483 M38.5 468 V483 M42.5 468 V483 M32 472.5 H43.5 M32 477.5 H43.5" stroke="#e2e2e2" stroke-width="1"/>
<path d="M25.4 467.6 H39.4 M33 483 H43.2" stroke="#21709f" stroke-width="1.5"/>
<rect x="25.2" y="471.2" width="6.8" height="12.6" rx="2.4" fill="#1c1c1c"/>
<circle cx="28.6" cy="474.6" r="2.2" fill="#d62222"/><circle cx="28.6" cy="480.4" r="2.2" fill="#1f8f2a"/>
</g>
<!-- ===== heads-up view toolbar ===== -->
<defs>
<radialGradient id="glens" cx="0.4" cy="0.35" r="0.7"><stop offset="0" stop-color="#ffffff"/><stop offset="1" stop-color="#d3e4ef"/></radialGradient>
<linearGradient id="gtel" x1="0" y1="0" x2="1" y2="1"><stop offset="0" stop-color="#ffffff"/><stop offset="1" stop-color="#b9b9b9"/></linearGradient>
<linearGradient id="gface" x1="0" y1="0" x2="1" y2="1"><stop offset="0" stop-color="#b5dcee"/><stop offset="1" stop-color="#5fa6c8"/></linearGradient>
<radialGradient id="ggray" cx="0.35" cy="0.3" r="0.8"><stop offset="0" stop-color="#fafafa"/><stop offset="1" stop-color="#d9d9d9"/></radialGradient>
<pattern id="hatch" width="2.4" height="2.4" patternUnits="userSpaceOnUse" patternTransform="rotate(-35)"><rect width="2.4" height="2.4" fill="#2d7ea8"/><rect width="2.4" height="1" fill="#bfe0f0"/></pattern>
</defs>
<!-- zoom to fit -->
<g>
<path d="M618.4 164.6 L616.4 166.8" stroke="#8e8e8e" stroke-width="1.6"/><path d="M616.8 166.2 L612.8 170.6" stroke="#5aa6cc" stroke-width="3.8"/><path d="M615.6 165 L618 167.4 M611.4 169.4 L614 171.8" stroke="#2d7ea8" stroke-width="0.7"/>
<circle cx="622.3" cy="160.4" r="6" fill="url(#glens)" stroke="#8e8e8e" stroke-width="1.3"/>
<path d="M622.3 156 L620.9 157.8 H623.7 Z M622.3 164.8 L620.9 163 H623.7 Z M617.9 160.4 L619.7 159 V161.8 Z M626.7 160.4 L624.9 159 V161.8 Z" fill="#444"/>
</g>
<!-- zoom to area -->
<g>
<path d="M642.3 154.4 H654.6 V166.4 H650" fill="none" stroke="#444" stroke-width="1" stroke-dasharray="2.4 1.4"/>
<path d="M642.6 166.8 L640.6 169" stroke="#8e8e8e" stroke-width="1.6"/><path d="M641 168.4 L637.4 172.4" stroke="#5aa6cc" stroke-width="3.8"/><path d="M639.8 167.2 L642.2 169.6 M636 171.2 L638.6 173.6" stroke="#2d7ea8" stroke-width="0.7"/>
<circle cx="646.4" cy="162.4" r="6.2" fill="url(#glens)" stroke="#8e8e8e" stroke-width="1.3"/>
</g>
<!-- previous view -->
<g>
<path d="M664 165 L667.6 161 L677.6 155.2 L680.2 158 L676 163.6 L668.6 171 Q664.6 171.4 664 165 Z" fill="url(#gtel)" stroke="#8a8a8a" stroke-width="0.9" stroke-linejoin="round"/>
<ellipse cx="666.4" cy="168" rx="2.1" ry="3.2" transform="rotate(-40 666.4 168)" fill="#e9e9e9" stroke="#8a8a8a" stroke-width="0.8"/><path d="M670 159.8 L673.6 165.6 M674.6 157 L677.6 161.6" stroke="#9a9a9a" stroke-width="0.8" fill="none"/>
<path d="M671.4 167.6 L675.6 164.4 V166.4 H681 V168.8 H675.6 V170.8 Z" fill="#3f8fbd"/>
</g>
<!-- section view -->
<g>
<path d="M689.4 160.6 Q698 151.8 706.8 160.6 V167.6 L702.6 169 V161.6 Q698 157 693.6 161.6 L696 162 V170 L689.4 171.6 Z" fill="#e2e2e2" stroke="#777" stroke-width="0.8"/>
<path d="M696 161.4 Q698.6 158.4 702.6 161.6 V169 L696 170 Z" fill="#bdbdbd"/>
<path d="M689.6 160.8 L696 162 V170.2 L689.6 171.6 Z" fill="url(#hatch)" stroke="#1b5d86" stroke-width="0.7"/>
<path d="M702.6 161.6 L706.8 160.6 V167.6 L702.6 169 Z" fill="url(#hatch)" stroke="#1b5d86" stroke-width="0.7"/>
</g>
<!-- dynamic annotation views -->
<g>
<path d="M715 166.4 L718.6 162.4 L728.2 155.2 L731 158 L726.6 164 L719.6 170.4 Q715.6 171.4 715 166.4 Z" fill="url(#gtel)" stroke="#8a8a8a" stroke-width="0.9" stroke-linejoin="round"/>
<ellipse cx="717.4" cy="168" rx="2.1" ry="3.2" transform="rotate(-40 717.4 168)" fill="#e9e9e9" stroke="#8a8a8a" stroke-width="0.8"/><path d="M721 161 L724.4 166 M725.4 157.4 L728.4 161.8" stroke="#9a9a9a" stroke-width="0.8" fill="none"/>
<path d="M720.6 154.2 H726.8 L723.6 157.6 H726 L717.6 164 L720.6 159.6 H717.8 Z" fill="#f6c63a" stroke="#c7721a" stroke-width="0.7" stroke-linejoin="round"/>
<text x="728.4" y="171.8" text-anchor="middle" font-family="Liberation Serif, serif" font-weight="bold" font-size="11" fill="#3f8fbd">A</text>
</g>
<!-- view orientation -->
<g>
<path d="M746 154.4 H758.6 V166.8 L753.8 171.6 M758.6 154.4 L753.8 159.4 M746 154.4 L741.2 159.4" fill="none" stroke="#444" stroke-width="1"/>
<path d="M752.4 154.4 V158.6 M751 157 L752.4 158.8 L753.8 157 M758.6 162.8 H754.6 M756.2 161.4 L754.4 162.8 L756.2 164.2" fill="none" stroke="#444" stroke-width="0.9"/>
<rect x="741.4" y="159.4" width="12.4" height="12.2" fill="url(#gface)" stroke="#1b5d86" stroke-width="1"/>
</g>
<use href="#ddg" x="769.4" y="163.2"/>
<!-- display style -->
<g stroke-linejoin="round">
<path d="M782.2 156.6 L791 153.4 L798.8 156.6 V168 L787.6 171.8 L782.2 167.8 Z" fill="#fff" stroke="#7a7a7a" stroke-width="1"/>
<path d="M782.2 156.6 L787.6 159.6 V171.8 L782.2 167.8 Z" fill="#7db7d6"/>
<path d="M787.6 159.6 L792.6 157.8 V170 L787.6 171.8 Z" fill="url(#gface)"/>
<path d="M782.2 156.6 L791 153.4 L794.6 155 L787.6 159.6 Z" fill="#c5e3f2"/>
<path d="M782.2 156.6 L787.6 159.6 L798.8 156.6 M787.6 159.6 V171.8" fill="none" stroke="#7a7a7a" stroke-width="0.9"/>
</g>
<use href="#ddg" x="809.4" y="163.2"/>
<!-- hide/show -->
<g>
<path d="M821 163 Q830 153.6 839.2 163 Q830 172 821 163 Z" fill="#efefef" stroke="#a6a6a6" stroke-width="1"/>
<circle cx="830" cy="162.6" r="3.9" fill="#8a8a8a"/><circle cx="828.8" cy="161.4" r="1.4" fill="#c9c9c9"/>
<path d="M830 155.6 V171.2" stroke="#777" stroke-width="1"/>
</g>
<use href="#ddg" x="849.4" y="163.2"/>
<!-- edit appearance (disabled) -->
<g>
<circle cx="869" cy="160.6" r="7.8" fill="url(#ggray)" stroke="#dcdcdc" stroke-width="0.8"/>
<path d="M869.4 170.6 L870.6 166.4 L877.4 159.8 L880 162.4 L873.4 169.2 Z" fill="#ececec" stroke="#d2d2d2" stroke-width="0.8"/>
</g>
<!-- scene -->
<g>
<rect x="886" y="161.4" width="19.2" height="11.2" fill="#4a4a4a"/>
<path d="M888.4 164.4 H891.6 V166.8 H888.4 Z M894 164.4 H897.2 V166.8 H894 Z M899.6 164.4 H902.8 V166.8 H899.6 Z M890.8 169.2 H894.4 V172 H890.8 Z M897 169.2 H900.6 V172 H897 Z" fill="#f3f3f3"/>
<clipPath id="cps"><circle cx="895.4" cy="160.6" r="7.8"/></clipPath>
<g clip-path="url(#cps)">
<rect x="887" y="152" width="17" height="17" fill="#e9c15a"/>
<path d="M887 152 H896.6 L895 162 L887 161.4 Z" fill="#4d93dc"/>
<path d="M896.6 152 H904 V162.6 L895 162 Z" fill="#de4a44"/>
<path d="M887 161.4 L895 162 L893.4 169 H887 Z" fill="#46ad3c"/>
<ellipse cx="892" cy="156.4" rx="2.6" ry="2" fill="#d9ecff" opacity="0.8"/>
</g>
</g>
<use href="#ddg" x="915.3" y="163.2"/>
<!-- view settings -->
<g>
<rect x="927.6" y="155.6" width="17" height="11" fill="#e6e6e6" stroke="#6a6a6a" stroke-width="1.3"/>
<path d="M936.1 166.8 V169.6" stroke="#6a6a6a" stroke-width="1.6"/><path d="M932 170.4 H940.4" stroke="#555" stroke-width="1.6"/>
</g>
<use href="#ddg" x="955.3" y="163.2"/>
<!-- ===== document window controls ===== -->
<g fill="none" stroke="#a2a2a2" stroke-width="1">
<rect x="1198.5" y="134.5" width="11" height="13"/><path d="M1198.5 135 H1209.5" stroke-width="1.6"/><path d="M1200 141 L1203.4 137.6 V144.4 Z" fill="#a2a2a2" stroke="none"/>
<rect x="1224.5" y="134.5" width="11" height="13"/><path d="M1224.5 135 H1235.5" stroke-width="1.6"/><path d="M1234.2 141 L1230.8 137.6 V144.4 Z" fill="#a2a2a2" stroke="none"/>
<rect x="1251.2" y="144" width="9.8" height="2.8" fill="#a2a2a2" stroke="none"/>
<path d="M1278.6 138.4 V135.8 H1287.4 V142.2 H1284.2" /><path d="M1278.6 135.9 H1287.4" stroke-width="1.5"/>
<rect x="1275.6" y="138.8" width="8.4" height="6.6"/><path d="M1275.6 139 H1284" stroke-width="1.5"/>
<path d="M1303.2 136.2 L1312.8 145.8 M1312.8 136.2 L1303.2 145.8" stroke-width="1.2"/>
</g>
<!-- confirmation corner -->
<g fill="none">
<path d="M1246 182.8 H1226 V198 Q1226 207 1235 207 H1245" stroke="#dbe7ef" stroke-width="1.6"/>
<path d="M1247 207 L1256.8 197.6 V203.2 Q1264.6 203.4 1268.8 197.4 Q1267.4 210 1256.8 210.8 V216.8 Z" fill="#d3e2ec" stroke="#c3d6e2" stroke-width="0.6"/>
<path d="M1274.4 217.2 L1289.8 232.6 M1289.8 217.2 L1274.4 232.6" stroke="#f3d2d2" stroke-width="6.4" stroke-linecap="round"/>
</g>
<!-- ===== task pane icons ===== -->
<g>
<path d="M1308.4 189.4 V196.6 H1321.8 V189.4" fill="#fff" stroke="#222" stroke-width="1.1"/>
<path d="M1306.4 190.6 L1315.1 181.4 L1323.8 190.6" fill="none" stroke="#1b5d86" stroke-width="2.6" stroke-linejoin="miter"/>
<path d="M1307.4 190 L1315.1 182.2 L1322.8 190" fill="none" stroke="#6db0d4" stroke-width="0.8"/>
<rect x="1313.2" y="190.4" width="4.4" height="6.2" fill="#fff" stroke="#222" stroke-width="1"/><rect x="1316" y="193" width="1" height="1.4" fill="#222"/>
</g>
<g fill="#f4f4f4" stroke="#222" stroke-width="1" stroke-linejoin="round">
<path d="M1308.4 207.4 L1311.4 205.2 L1314.4 207 V220.6 L1311.4 220.6 L1308.4 217.8 Z"/>
<path d="M1311.4 208.4 L1314.6 204.8 L1318 206.4 V219.6 L1314.6 221 L1311.4 220.6 Z"/>
<path d="M1314.8 208.4 L1318.2 204.6 L1321.8 206.6 V218.4 L1318 220 L1314.8 221 Z"/>
<path d="M1311.4 208.4 V220.6 M1314.8 208.4 V221" fill="none"/>
</g>
<g stroke="#333" stroke-width="1" stroke-linejoin="round">
<path d="M1306 244.4 V231 L1307.4 229.6 H1312.8 L1314.2 231.4 H1320.4 V234.6" fill="#d6d6d6"/>
<path d="M1306 244.4 L1310.4 234.4 H1325 L1320.4 244.4 Z" fill="url(#gfold)"/>
</g>
<g>
<rect x="1306.8" y="253.2" width="17" height="15.2" rx="1.4" fill="#f2f2f2" stroke="#222" stroke-width="1.1"/>
<path d="M1309 255.6 H1316.6 V258.4 H1309 Z M1318.4 255.6 H1321.4 V258 H1318.4 Z" fill="#f3c21c" stroke="#6b5200" stroke-width="0.6"/>
<path d="M1311.4 260.4 H1314.4 V263.8 H1317.4 V266.4 H1308.8 V263.8 H1311.4 Z" fill="#f3c21c" stroke="#6b5200" stroke-width="0.6"/>
<rect x="1319.4" y="260.6" width="2.6" height="6" fill="#bdbdbd" stroke="#555" stroke-width="0.5"/>
</g>
<g>
<clipPath id="cpt"><circle cx="1314.8" cy="284.4" r="8"/></clipPath>
<g clip-path="url(#cpt)">
<rect x="1306" y="276" width="18" height="18" fill="#e2b45a"/>
<path d="M1306 276 H1316 L1314.4 286 L1306 285.4 Z" fill="#3f86d8"/>
<path d="M1316 276 H1324 V286.8 L1314.4 286 Z" fill="#d93a30"/>
<path d="M1306 285.4 L1314.4 286 L1312.4 293 H1306 Z" fill="#3aa832"/>
<ellipse cx="1311.4" cy="280.2" rx="2.8" ry="2" fill="#d9ecff" opacity="0.8"/>
</g>
<circle cx="1314.8" cy="284.4" r="8" fill="none" stroke="#6a4a20" stroke-width="0.5" opacity="0.5"/>
</g>
<g>
<rect x="1306.6" y="300.6" width="17" height="16.6" rx="1" fill="#fff" stroke="#222" stroke-width="1.1"/>
<rect x="1306.6" y="300.4" width="17" height="3.2" fill="#6db0d4" stroke="#0f5580" stroke-width="0.8"/>
<rect x="1308.6" y="305.6" width="4" height="2.4" fill="#4d94bd" stroke="#0f5580" stroke-width="0.7"/><rect x="1308.6" y="309.4" width="4" height="2.4" fill="#4d94bd" stroke="#0f5580" stroke-width="0.7"/><rect x="1308.6" y="313.2" width="4" height="2.4" fill="#4d94bd" stroke="#0f5580" stroke-width="0.7"/>
<path d="M1314.4 306.8 H1321.6 M1314.4 310.6 H1321.6 M1314.4 314.4 H1321.6" stroke="#222" stroke-width="0.9"/>
</g>
<!-- ===== bottom bar ===== -->
<g fill="#8d8f92">
<path d="M6 901.4 L11.4 896.8 V906 Z M4.6 896.8 H6 V906 H4.6 Z"/>
<path d="M20.6 901.4 L26 896.8 V906 Z"/>
<path d="M45.4 901.4 L40 896.8 V906 Z"/>
<path d="M60 901.4 L54.6 896.8 V906 Z M60 896.8 H61.4 V906 H60 Z"/>
</g>
<path d="M18.5 895.5 V908.5 M34.5 895.5 V908.5 M50.5 895.5 V908.5" stroke="#cfd0d2" stroke-width="1"/>
<path d="M8.8 880.4 L5 884.4 L8.8 888.4 M237.4 880.4 L241.2 884.4 L237.4 888.4" fill="none" stroke="#444" stroke-width="1.7"/>
<!-- status icons -->
<rect x="1117.8" y="913.2" width="7.2" height="12.8" rx="2.4" fill="#1c1c1c"/>
<circle cx="1121.4" cy="916.8" r="2.2" fill="#e02020"/><circle cx="1121.4" cy="922.4" r="2.2" fill="#24a224"/>
<path d="M1217.6 921.6 H1223.4 L1220.5 918.2 Z" fill="#333"/>
<g fill="#f2f2f2" stroke="#222" stroke-width="1" stroke-linejoin="round">
<path d="M1290.4 917.6 L1295.6 913 L1306 917.4 L1299.4 923.6 Z"/>
<path d="M1290.4 917.6 L1299.4 923.6 L1299 926 L1290.2 920.4 Z"/><path d="M1299.4 923.6 L1306 917.4 L1305.6 919.8 L1299 926 Z"/>
<circle cx="1295.6" cy="917" r="1.4"/><path d="M1299 919.6 L1301.6 917.4" />
</g>
<g fill="#b8b8b8"><rect x="1324" y="918" width="2" height="2"/><rect x="1321" y="921" width="2" height="2"/><rect x="1324" y="921" width="2" height="2"/><rect x="1318" y="924" width="2" height="2"/><rect x="1321" y="924" width="2" height="2"/><rect x="1324" y="924" width="2" height="2"/></g>
</svg>

<!-- text -->
<span class="t" style="left:182.80px;top:16px;letter-spacing:-0.261px;font-size:12px;">File</span>
<span class="t" style="left:216.55px;top:16px;letter-spacing:0.091px;font-size:12px;">Edit</span>
<span class="t" style="left:252.30px;top:16px;letter-spacing:0.126px;font-size:12px;">View</span>
<span class="t" style="left:293.55px;top:16px;letter-spacing:0.006px;font-size:12px;">Insert</span>
<span class="t" style="left:338.30px;top:16px;letter-spacing:-0.143px;font-size:12px;">Tools</span>
<span class="t" style="left:380.30px;top:16px;letter-spacing:0.519px;font-size:12px;">Window</span>
<span class="t" style="left:440.80px;top:16px;letter-spacing:0.028px;font-size:12px;">Help</span>
<span class="t" style="left:857.80px;top:16px;letter-spacing:-0.296px;font-size:12px;">Sketch3 of Select par...</span>
<span class="t" style="left:1005.70px;top:16px;letter-spacing:-0.548px;font-size:12px;color:#6e6e6e;">Search Commands</span>
<span class="t" style="left:18.70px;top:69px;letter-spacing:0.243px;font-size:10.7px;">Exit</span>
<span class="t" style="left:10.80px;top:82px;letter-spacing:0.269px;font-size:10.7px;">Sketch</span>
<span class="t" style="left:67.80px;top:69px;letter-spacing:0.237px;font-size:10.7px;">Smart</span>
<span class="t" style="left:55.20px;top:82px;letter-spacing:0.522px;font-size:10.7px;">Dimension</span>
<span class="t" style="left:280.70px;top:69px;letter-spacing:-0.067px;font-size:10.7px;"><u>T</u>rim</span>
<span class="t" style="left:271.90px;top:82px;letter-spacing:0.392px;font-size:10.7px;">Entities</span>
<span class="t" style="left:320.05px;top:69px;letter-spacing:0.409px;font-size:10.7px;">Convert</span>
<span class="t" style="left:321.05px;top:82px;letter-spacing:0.392px;font-size:10.7px;">Entities</span>
<span class="t" style="left:373.20px;top:76px;letter-spacing:0.645px;font-size:10.7px;">Offset</span>
<span class="t" style="left:370.05px;top:89px;letter-spacing:0.392px;font-size:10.7px;">Entities</span>
<span class="t" style="left:440.80px;top:50px;letter-spacing:0.492px;font-size:10.7px;">Mirror Entities</span>
<span class="t" style="left:440.80px;top:76px;letter-spacing:0.277px;font-size:10.7px;">Linear Sketch Pattern</span>
<span class="t" style="left:440.80px;top:102px;letter-spacing:0.419px;font-size:10.7px;color:#b4b4b4;">Move Entities</span>
<span class="t" style="left:594.90px;top:69px;letter-spacing:0.400px;font-size:10.7px;">Display/Delete</span>
<span class="t" style="left:607.80px;top:82px;letter-spacing:0.426px;font-size:10.7px;">Relations</span>
<span class="t" style="left:679.05px;top:76px;letter-spacing:0.386px;font-size:10.7px;">Repair</span>
<span class="t" style="left:679.05px;top:89px;letter-spacing:0.269px;font-size:10.7px;">Sketch</span>
<span class="t" style="left:726.55px;top:69px;letter-spacing:0.554px;font-size:10.7px;">Quick</span>
<span class="t" style="left:725.55px;top:82px;letter-spacing:0.258px;font-size:10.7px;">Snaps</span>
<span class="t" style="left:771.80px;top:76px;letter-spacing:0.552px;font-size:10.7px;">Rapid</span>
<span class="t" style="left:769.90px;top:89px;letter-spacing:0.269px;font-size:10.7px;">Sketch</span>
<span class="t" style="left:813.70px;top:76px;letter-spacing:0.517px;font-size:10.7px;">Instant2D</span>
<span class="t" style="left:7.80px;top:129px;letter-spacing:-0.351px;font-size:12px;">Features</span>
<span class="t" style="left:67.30px;top:129px;letter-spacing:0.157px;font-size:12px;font-weight:bold;">Sketch</span>
<span class="t" style="left:123.70px;top:129px;letter-spacing:-0.332px;font-size:12px;">Surfaces</span>
<span class="t" style="left:183.70px;top:129px;letter-spacing:-0.141px;font-size:12px;">Sheet Metal</span>
<span class="t" style="left:262.30px;top:129px;letter-spacing:-0.300px;font-size:12px;">Evaluate</span>
<span class="t" style="left:321.55px;top:129px;letter-spacing:-0.407px;font-size:12px;">SOLIDWORKS Add-Ins</span>
<span class="t" style="left:454.55px;top:129px;letter-spacing:-0.126px;font-size:12px;">Analysis Preparation</span>
<span class="t" style="left:577.80px;top:129px;letter-spacing:0.056px;font-size:12px;">Flow Simulation</span>
<span class="t" style="left:24.30px;top:226px;letter-spacing:-0.020px;font-size:12px;">Select partial loop  (Default&lt;&lt;Default&gt;_Di</span>
<span class="t" style="left:47.80px;top:248px;letter-spacing:0.208px;font-size:12px;">History</span>
<span class="t" style="left:47.80px;top:270px;letter-spacing:-0.462px;font-size:12px;">Sensors</span>
<span class="t" style="left:47.80px;top:292px;letter-spacing:0.219px;font-size:12px;">Annotations</span>
<span class="t" style="left:47.80px;top:314px;letter-spacing:-0.064px;font-size:12px;">Equations</span>
<span class="t" style="left:47.80px;top:336px;letter-spacing:0.100px;font-size:12px;">Material &lt;not specified&gt;</span>
<span class="t" style="left:47.80px;top:358px;letter-spacing:-0.068px;font-size:12px;">Front Plane</span>
<span class="t" style="left:47.80px;top:380px;letter-spacing:0.103px;font-size:12px;">Top Plane</span>
<span class="t" style="left:47.80px;top:402px;letter-spacing:-0.068px;font-size:12px;">Right Plane</span>
<span class="t" style="left:47.80px;top:424px;letter-spacing:0.297px;font-size:12px;">Origin</span>
<span class="t" style="left:47.80px;top:446px;letter-spacing:-0.300px;font-size:12px;">Boss-Extrude1</span>
<span class="t" style="left:47.80px;top:468px;letter-spacing:-0.081px;font-size:12px;">(-) Sketch3</span>
<span class="t" style="left:78.80px;top:893px;letter-spacing:0.186px;font-size:12px;font-weight:bold;">Model</span>
<span class="t" style="left:133.30px;top:893px;letter-spacing:-0.321px;font-size:12px;">3D Views</span>
<span class="t" style="left:200.30px;top:893px;letter-spacing:0.054px;font-size:12px;">Motion Study 1</span>
<span class="t" style="left:1.30px;top:912px;letter-spacing:-0.057px;font-size:12px;">Select partial loop</span>
<span class="t" style="left:809.80px;top:912px;letter-spacing:-0.111px;font-size:12px;">Length: 45.396mm</span>
<span class="t" style="left:917.30px;top:912px;letter-spacing:-0.007px;font-size:12px;">Under Defined</span>
<span class="t" style="left:1011.30px;top:912px;letter-spacing:-0.073px;font-size:12px;">Editing Sketch3</span>
<span class="t" style="left:1162.30px;top:912px;letter-spacing:-0.011px;font-size:12px;">MMGS</span>
</div>
</body>
</html>
